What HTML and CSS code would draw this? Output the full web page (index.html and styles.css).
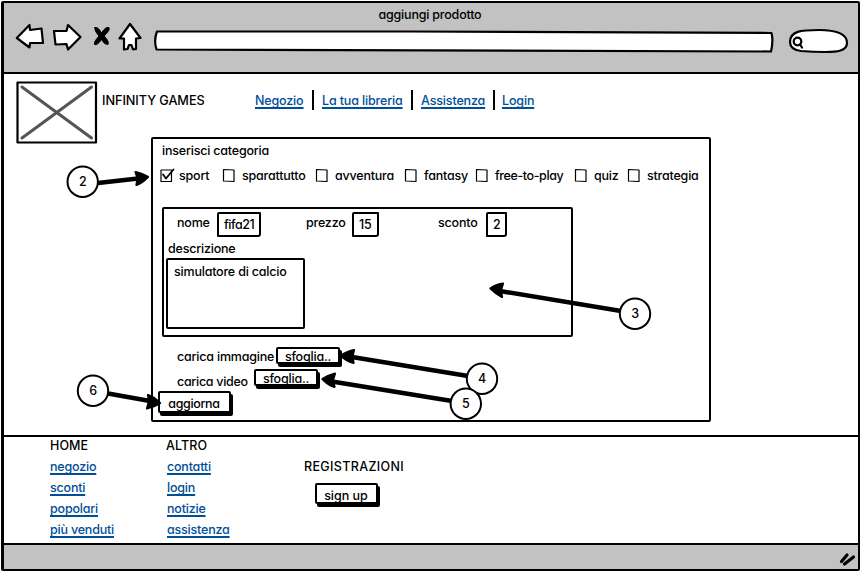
FILE: index.html
```html
<!DOCTYPE html>
<html lang="it">
<head>
<meta charset="utf-8">
<title>aggiungi prodotto</title>
<link rel="stylesheet" href="styles.css">
</head>
<body>
<div class="window">
  <header class="chrome">
    <div class="title"><span>aggiungi prodotto</span></div>
    <div class="toolbar">
      <svg class="back" viewBox="14 22 32 30" width="32" height="30"><path d="M16.800 38 L29.500 25 L30 30 L41.500 28.500 L43 43 L30 43 L29.500 47.500 Z"/></svg>
      <svg class="forward" viewBox="51 22 34 30" width="34" height="30"><path d="M54 31 L66.500 31 L68 25 L80.500 37 L68 49.500 L66.500 44 L55.500 44.500 Z"/></svg>
      <svg class="stop" viewBox="92 22 20 30" width="20" height="30"><path d="M95 27.500 Q98 26.500 101.500 33 Q105.500 26.500 109 27.500 Q110.500 30 104 36 Q109.500 41.500 108 44.500 Q104.500 45 101.500 39.500 Q97.500 45.500 94.500 44.500 Q93.500 42 99 36 Q94 30.500 95 27.500 Z"/></svg>
      <svg class="home" viewBox="117 20 26 32" width="26" height="32"><path d="M130 24 L140.500 38 L136 38.500 L136 49 L133 49.500 L131.500 45 L129 45 L127.500 49 L124 49.500 L124 38.500 L119.500 38.500 Z"/></svg>
      <svg class="address" viewBox="152 28 624 25" width="624" height="25"><path d="M157 31.500 L410 31.500 L771.500 33 Q773.500 41 771 51.500 L156.500 49.500 Q153.500 40 157 31.500 Z"/></svg>
      <svg class="search" viewBox="787 26 63 30" width="63" height="30"><path d="M790 42 C790 31 801 30 819 30 C836 30 847 33 847 43 C847 51 837 52 825 52 C813 52 807 51.500 801 51 C793 50 790 46 790 42 Z"/><circle cx="797.500" cy="41.500" r="3.800"/><path d="M800 44.500 L802 47.500"/></svg>
    </div>
  </header>

  <main>
    <div class="top">
      <svg class="logo" viewBox="0 0 82 64" width="82" height="64"><path class="frame" d="M1.500 1.500 H80 V61.500 H1.500 Z"/><path class="cross" d="M6 6 L75.500 57 M75.500 6 L6 57"/></svg>
      <span class="brand">INFINITY GAMES</span>
      <nav>
        <a class="n1">Negozio</a><a class="n2">La tua libreria</a><a class="n3">Assistenza</a><a class="n4">Login</a>
      </nav>
    </div>

    <section class="panel">
      <div class="legend"><span>inserisci categoria</span></div>
      <div class="checks">
        <label><svg viewBox="0 0 16 16" width="16" height="16"><path d="M1 2 H11.500 V13.500 H1 Z"/><path class="tick" d="M3 6.500 L6 10.500 L13.500 1.500"/></svg><span>sport</span></label>
        <label><svg viewBox="0 0 16 16" width="16" height="16"><path d="M.5 1.500 L11 2 V13.500 L.5 13 Z"/></svg><span>sparattutto</span></label>
        <label><svg viewBox="0 0 16 16" width="16" height="16"><path d="M.5 1.500 L11 2 V13.500 L.5 13 Z"/></svg><span>avventura</span></label>
        <label><svg viewBox="0 0 16 16" width="16" height="16"><path d="M.5 1.500 L11 2 V13.500 L.5 13 Z"/></svg><span>fantasy</span></label>
        <label><svg viewBox="0 0 16 16" width="16" height="16"><path d="M.5 1.500 L11 2 V13.500 L.5 13 Z"/></svg><span class="tight">free-to-play</span></label>
        <label><svg viewBox="0 0 16 16" width="16" height="16"><path d="M.5 1.500 L11 2 V13.500 L.5 13 Z"/></svg><span>quiz</span></label>
        <label><svg viewBox="0 0 16 16" width="16" height="16"><path d="M.5 1.500 L11 2 V13.500 L.5 13 Z"/></svg><span>strategia</span></label>
      </div>
      <div class="details">
        <div class="fields">
          <span class="field f1"><span>nome</span><b class="input">fifa21</b></span>
          <span class="field f2"><span>prezzo</span><b class="input">15</b></span>
          <span class="field f3"><span>sconto</span><b class="input">2</b></span>
        </div>
        <div class="desc"><span>descrizione</span></div>
        <div class="textarea"><span>simulatore di calcio</span></div>
      </div>
      <div class="upload image"><span>carica immagine</span><b class="button">sfoglia..</b></div>
      <div class="upload video"><span>carica video</span><b class="button">sfoglia..</b></div>
      <b class="button update">aggiorna</b>
    </section>
  </main>

  <footer>
    <div class="col home-links"><span>HOME</span><a>negozio</a><a>sconti</a><a>popolari</a><a>più venduti</a></div>
    <div class="col other-links"><span>ALTRO</span><a>contatti</a><a>login</a><a>notizie</a><a>assistenza</a></div>
    <div class="col signup"><span>REGISTRAZIONI</span><b class="button">sign up</b></div>
  </footer>
  <div class="status"><svg viewBox="838 550 18 18" width="18" height="18"><path d="M841.500 561.500 L847 555 M844.500 564 L853.500 557"/></svg></div>
</div>

<svg class="notes" viewBox="0 0 861 572" width="861" height="572">
  <path class="shaft" d="M98 183 L138 178.500 M621 311 L500 291 M468 376 L352 357 M452 401 L332 381.500 M108 393.500 L150 401"/>
  <path class="head" d="M148 177 Q141 173 135.500 172 L137.500 178 L136.500 185 Q142 183 148 177 Z M490.500 288.500 Q497 284 503 283.500 L501 290 L502 297 Q496 294 490.500 288.500 Z M341 355.500 Q348 351 354 350 L352.500 356 L353.500 363 Q346 361 341 355.500 Z M322.500 379 Q329 375 335 373.500 L333 380 L334.500 387 Q328 385 322.500 379 Z M160 403 Q154 397 148 395 L149 401 L147 408.500 Q154 407 160 403 Z"/>
  <g class="pin"><circle cx="82.700" cy="181.700" r="15.200"/><text x="82.700" y="186.300">2</text></g>
  <g class="pin"><circle cx="635" cy="313.700" r="15.200"/><text x="635" y="318.300">3</text></g>
  <g class="pin"><circle cx="482" cy="378.800" r="15.200"/><text x="482" y="383.300">4</text></g>
  <g class="pin"><circle cx="465.800" cy="403.800" r="15.200"/><text x="465.800" y="408.300">5</text></g>
  <g class="pin"><circle cx="93" cy="390.700" r="15.200"/><text x="93" y="395.300">6</text></g>
</svg>
</body>
</html>
```
FILE: styles.css
```css
* { box-sizing: border-box; }
body {
  margin: 0;
  width: 861px;
  height: 572px;
  padding: 1px 1px 0;
  overflow: hidden;
  background: #fff;
  color: #000;
  font: 500 12.5px/16px Inter, "Noto Sans", sans-serif;
  font-feature-settings: "cv11";
  letter-spacing: -.2px;
  white-space: nowrap;
}
svg { display: block; overflow: visible; fill: #fff; stroke: #000; stroke-width: 2.2; stroke-linejoin: round; stroke-linecap: round; }
b { font-weight: 500; }

.window {
  width: 859px;
  height: 570px;
  border: 2px solid #000;
  border-left-width: 3px;
  border-radius: 2px;
  display: flex;
  flex-direction: column;
}
.chrome { height: 71px; background: #c2c2c2; border-bottom: 2px solid #000; }
.title { height: 17px; padding: 4px 2px 0 0; text-align: center; }
.toolbar { display: flex; align-items: flex-start; padding-left: 10px; }
.back { margin-top: 2px; }
.forward { margin: 2px 0 0 5px; }
.stop { margin: 2px 0 0 7px; fill: #000; stroke-width: 1; }
.home { margin-left: 5px; }
.address { margin: 8px 0 0 9px; }
.search { margin: 6px 0 0 11px; }

main { height: 361px; }
.top { display: flex; height: 63px; padding-left: 12px; }
.logo { margin-top: 7px; }
.logo .cross { stroke: #555; stroke-width: 3; }
.brand { margin: 19px 0 0 4px; width: 153px; letter-spacing: -.05px; font-size: 12.7px; }
nav { display: flex; padding-top: 16px; letter-spacing: -.15px; }
a { color: #004e98; text-decoration: underline; text-decoration-thickness: 1.5px; text-underline-offset: 1.5px; text-decoration-skip-ink: none; }
nav a { height: 20px; line-height: 22px; border-right: 2px solid #000; }
.n1 { width: 59px; }
.n2, .n3 { padding-left: 8px; }
.n2 { width: 99px; }
.n3 { width: 82px; }
.n4 { padding-left: 7px; border: 0; }

.panel { margin-left: 147px; width: 560px; height: 285px; border: 2px solid #000; border-radius: 2px; }
.legend { height: 28px; padding: 4px 0 0 9px; }
.checks { display: grid; grid-template-columns: 63px 93px 89px 71px 99px 53px auto; padding: 1px 0 0 7px; height: 40px; }
.checks label { display: flex; gap: 3px; }
.checks svg { stroke-width: 1.2; }
.checks .tick { fill: none; stroke-width: 1.8; }
.tight { letter-spacing: -.4px; }

.details { margin-left: 9px; width: 411px; height: 130px; border: 2px solid #000; border-radius: 2px; }
.fields { display: grid; grid-template-columns: 129px 132px auto; padding: 3px 0 0 13px; height: 31px; }
.field { display: flex; }
.field > span { padding-top: 3px; }
.f1 > span { width: 40px; }
.f2 > span { width: 46px; }
.f3 > span { width: 48px; }
.input { height: 25px; border: 2px solid #000; border-radius: 2px 1px 3px 1px; padding: 3px 4px 0 5px; }
.f1 .input { width: 44px; letter-spacing: -.45px; }
.f2 .input { width: 27px; }
.f3 .input { width: 21px; }
.desc { padding: 1px 0 0 4px; height: 18px; }
.textarea { margin-left: 2px; width: 139px; height: 71px; border: 2px solid #000; border-radius: 2px; padding: 4px 6px; }

.upload { display: flex; padding-left: 24px; height: 22px; }
.image { margin-top: 10px; }
.image > span { width: 99px; padding-top: 2px; }
.video > span { width: 77px; padding-top: 5px; letter-spacing: -.3px; }
.button {
  display: block;
  width: 64px;
  height: 17px;
  border: 2px solid #000;
  border-radius: 2px;
  box-shadow: 2px 3px 0 #000;
  background: #fff;
  text-align: center;
  line-height: 16px;
}
.upload .button { line-height: 15px; }
.update { margin-left: 5px; width: 73px; height: 22px; line-height: 21px; padding-right: 1px; letter-spacing: -.35px; }

footer { display: flex; height: 108px; border-top: 2px solid #000; padding-top: 1px; }
.col { display: flex; flex-direction: column; align-items: flex-start; gap: 5px; }
.col > span { letter-spacing: .1px; }
.home-links { padding-left: 46px; width: 162px; }
.other-links { width: 138px; }
.other-links a { margin-left: 1px; }
.signup { padding-top: 21px; }
.signup > span { letter-spacing: .35px; }
.signup .button { margin: 3px 0 0 11px; width: 63px; height: 21px; line-height: 21px; padding-right: 1px; letter-spacing: 0; }
.status { flex: 1; background: #c2c2c2; border-top: 2px solid #000; display: flex; justify-content: flex-end; padding: 5px 2px 0 0; }
.status path { stroke-width: 3.2; }

.notes { position: absolute; left: 0; top: 0; pointer-events: none; }
.shaft { stroke-width: 4.4; stroke-linecap: butt; }
.head { fill: #000; }
.pin circle { stroke-width: 2; }
.pin text { fill: #000; stroke: none; text-anchor: middle; }
```
